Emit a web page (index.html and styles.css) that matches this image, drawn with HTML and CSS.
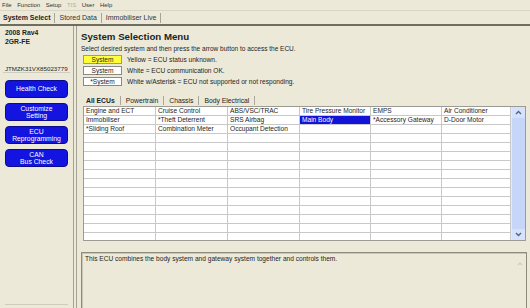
FILE: index.html
```html
<!DOCTYPE html>
<html lang="en">
<head>
  <meta charset="UTF-8" />
  <title>System Selection Menu</title>
  <meta name="viewport" content="width=device-width, initial-scale=1.0" />
  <link rel="stylesheet" href="styles.css">
</head>
<body>

  <!-- Menu bar -->
  <div class="menubar">
    <span>File</span><span>Function</span><span>Setup</span><span class="disabled">TIS</span><span>User</span><span>Help</span>
  </div>

  <!-- Screen tabs -->
  <div class="topbar">
    <span class="active">System Select</span>
    <span>Stored Data</span>
    <span>Immobiliser Live</span>
  </div>

  <div class="layout">
    <aside class="sidebar">
      <div class="vehicle">2008 Rav4<br>2GR-FE</div>
      <div class="vin">JTMZK31VX85023779</div>
      <button class="side-btn">Health Check</button>
      <button class="side-btn">Customize<br>Setting</button>
      <button class="side-btn">ECU<br>Reprogramming</button>
      <button class="side-btn">CAN<br>Bus Check</button>
      <div class="side-foot"></div>
    </aside>

    <main>
      <h1>System Selection Menu</h1>
      <p class="hint">Select desired system and then press the arrow button to access the ECU.</p>

      <div class="legend-row"><span class="sys yellow">System</span>Yellow = ECU status unknown.</div>
      <div class="legend-row"><span class="sys">System</span>White = ECU communication OK.</div>
      <div class="legend-row"><span class="sys">*System</span>White w/Asterisk = ECU not supported or not responding.</div>

      <div class="tabs">
        <span class="active">All ECUs</span>
        <span>Powertrain</span>
        <span>Chassis</span>
        <span>Body Electrical</span>
      </div>

      <div class="ecu-table">
        <div class="cells">
          <div class="row"><div>Engine and ECT</div><div>Cruise Control</div><div>ABS/VSC/TRAC</div><div>Tire Pressure Monitor</div><div>EMPS</div><div>Air Conditioner</div></div>
          <div class="row"><div>Immobiliser</div><div>*Theft Deterrent</div><div>SRS Airbag</div><div class="sel">Main Body</div><div>*Accessory Gateway</div><div>D-Door Motor</div></div>
          <div class="row"><div>*Sliding Roof</div><div>Combination Meter</div><div>Occupant Detection</div><div></div><div></div><div></div></div>
          <div class="row"><div></div><div></div><div></div><div></div><div></div><div></div></div>
          <div class="row"><div></div><div></div><div></div><div></div><div></div><div></div></div>
          <div class="row"><div></div><div></div><div></div><div></div><div></div><div></div></div>
          <div class="row"><div></div><div></div><div></div><div></div><div></div><div></div></div>
          <div class="row"><div></div><div></div><div></div><div></div><div></div><div></div></div>
          <div class="row"><div></div><div></div><div></div><div></div><div></div><div></div></div>
          <div class="row"><div></div><div></div><div></div><div></div><div></div><div></div></div>
          <div class="row"><div></div><div></div><div></div><div></div><div></div><div></div></div>
          <div class="row"><div></div><div></div><div></div><div></div><div></div><div></div></div>
          <div class="row"><div></div><div></div><div></div><div></div><div></div><div></div></div>
          <div class="row"><div></div><div></div><div></div><div></div><div></div><div></div></div>
          <div class="row"><div></div><div></div><div></div><div></div><div></div><div></div></div>
        </div>
        <div class="vscroll">
          <svg width="13" height="11" viewBox="0 0 13 11"><path d="M4 7 L6.5 4.5 L9 7" fill="none" stroke="#4d6185" stroke-width="1.3"/></svg>
          <svg width="13" height="11" viewBox="0 0 13 11"><path d="M4 4 L6.5 6.5 L9 4" fill="none" stroke="#4d6185" stroke-width="1.3"/></svg>
        </div>
      </div>

      <div class="desc">
        <p>This ECU combines the body system and gateway system together and controls them.</p>
        <div class="desc-scroll">
          <svg width="12" height="10" viewBox="0 0 12 10"><path d="M4 6 L6 4 L8 6" fill="none" stroke="#cfccbd" stroke-width="1.2"/></svg>
        </div>
      </div>
    </main>
  </div>

</body>
</html>
```

FILE: styles.css
```css
body {
  margin: 0;
  width: 530px;
  height: 308px;
  overflow: hidden;
  background-color: #ece9d8;
  font-family: "Liberation Sans", Arial, sans-serif;
  color: #1e1e1e;
}

/* Menu bar */
.menubar {
  display: flex;
  height: 10px;
  padding-left: 2px;
  font-size: 6px;
  line-height: 10px;
  color: #333;
}

.menubar span {
  margin-right: 5.5px;
}

.menubar .disabled {
  color: #b3b0a2;
}

/* Screen tabs */
.topbar {
  display: flex;
  align-items: center;
  height: 13px;
  border-top: 1px solid #d9d6c7;
  border-bottom: 2px solid #6e6d5f;
  font-size: 7px;
  color: #333;
}

.topbar span {
  padding: 0 4px;
  line-height: 10px;
  border-right: 1px solid #a6a495;
}

.topbar .active {
  padding-left: 3px;
  font-weight: bold;
  color: #1e1e1e;
}

.layout {
  display: flex;
  height: 282px;
}

/* Sidebar */
.sidebar {
  display: flex;
  flex-direction: column;
  width: 74px;
  padding: 3px 5px 0 5px;
  box-sizing: border-box;
  border-right: 1px solid #a3a193;
}

.vehicle {
  font-size: 6.8px;
  font-weight: bold;
  line-height: 8.5px;
}

.vin {
  margin: 20px -2px 0 -2px;
  padding-left: 2px;
  font-size: 6.2px;
  line-height: 6px;
  border-bottom: 1px solid #cfccbc;
}

.side-btn {
  display: block;
  width: 63px;
  height: 18px;
  margin-top: 5px;
  padding: 0;
  background-color: #1414e0;
  border: 1px solid #0b0b8c;
  border-radius: 4px;
  color: white;
  font-family: "Liberation Sans", Arial, sans-serif;
  font-size: 6.8px;
  line-height: 7.5px;
}

.vin + .side-btn {
  margin-top: 7px;
}

.side-foot {
  margin-top: auto;
  margin-bottom: 3px;
  border-bottom: 1px solid #cfccbc;
}

/* Main panel */
main {
  flex: 1;
  margin-left: 2px;
  padding: 5px 3px 0 4px;
  border-left: 1px solid #a3a193;
}

h1 {
  margin: 0;
  font-size: 9.7px;
  line-height: 12px;
}

.hint {
  margin: 2px 0 1px 0;
  font-size: 6.5px;
  line-height: 8px;
}

.legend-row {
  display: flex;
  align-items: center;
  height: 9px;
  margin-top: 2px;
  font-size: 6.6px;
}

.sys {
  width: 39px;
  height: 9px;
  margin: 0 5px 0 2px;
  box-sizing: border-box;
  background: #fff;
  border: 1px solid #8b8a80;
  text-align: center;
  line-height: 7px;
}

.sys.yellow {
  background: #ffff3a;
  border-color: #a8a33c;
}

.tabs {
  display: flex;
  align-items: center;
  height: 12px;
  margin: 8px 0 0 2px;
  font-size: 6.8px;
}

.tabs span {
  padding: 0 5px;
  line-height: 9px;
  border-right: 1px solid #aaa89a;
}

.tabs .active {
  padding-left: 3px;
  font-weight: bold;
}

/* ECU grid */
.ecu-table {
  display: flex;
  height: 135px;
  margin: 0 1px 0 2px;
  box-sizing: border-box;
  background: #fff;
  border: 1px solid #9c9b93;
  overflow: hidden;
}

.cells {
  width: 427px;
}

.row {
  display: grid;
  grid-template-columns: 72px 72px 72px 71px 71px 69px;
  height: 9px;
}

.row div {
  box-sizing: border-box;
  padding-left: 2px;
  border-right: 1px solid #c8c8c8;
  border-bottom: 1px solid #c8c8c8;
  font-size: 6.6px;
  line-height: 8px;
  white-space: nowrap;
  overflow: hidden;
}

.row .sel {
  background: #1212d8;
  color: white;
}

.vscroll {
  display: flex;
  flex-direction: column;
  justify-content: space-between;
  width: 13px;
  background: #c5d6f8;
  border-left: 1px solid #e4ecfc;
}

.vscroll svg {
  display: block;
  background: #d6e2fb;
}

/* Description */
.desc {
  display: flex;
  height: 56px;
  margin-top: 11px;
  box-sizing: border-box;
  border: 1px solid #8d8b7e;
  border-bottom: none;
  box-shadow: inset 1px 1px 0 #c9c6b6;
}

.desc p {
  flex: 1;
  margin: 0;
  padding: 2px 3px;
  font-size: 6.6px;
  line-height: 8px;
}

.desc-scroll {
  width: 12px;
  padding-top: 2px;
}
```
